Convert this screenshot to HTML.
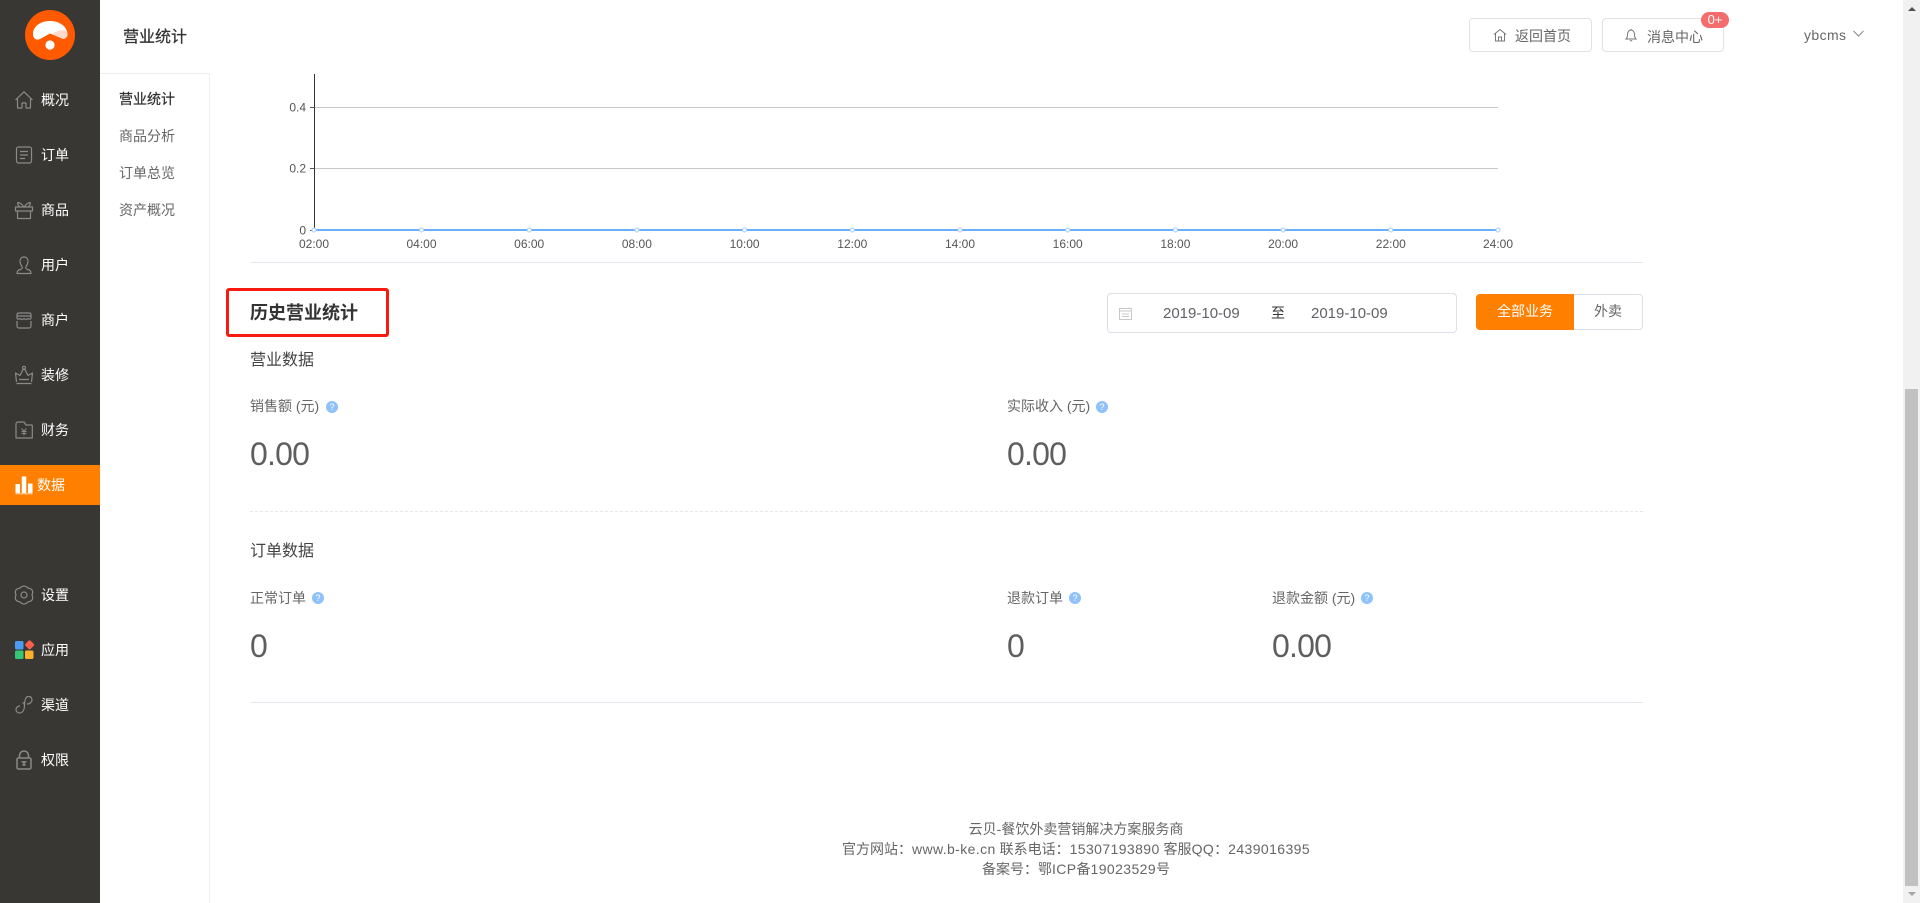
<!DOCTYPE html>
<html lang="zh">
<head>
<meta charset="utf-8">
<title>营业统计</title>
<style>
html,body{margin:0;padding:0;width:1920px;height:903px;overflow:hidden;background:#fff;}
body{position:relative;font-family:"Liberation Sans","Noto Sans CJK SC",sans-serif;font-size:14px;color:#666;}
.t{position:absolute;white-space:nowrap;line-height:20px;height:20px;}
.a{position:absolute;}
#side{position:absolute;left:0;top:0;width:100px;height:903px;background:#393734;}
#side .t{color:#fff;left:41px;}
#side svg{position:absolute;left:14px;width:20px;height:20px;fill:none;stroke:#8a8a8a;stroke-width:1.2;stroke-linejoin:round;}
#active{position:absolute;left:0;top:465px;width:100px;height:40px;background:#ff8000;}
.big{font-size:32px;line-height:40px;height:40px;color:#5e5e5e;letter-spacing:-.8px;}
.q{position:absolute;width:12px;height:12px;border-radius:50%;background:#8fc1fb;color:#fff;font-size:9px;line-height:12px;text-align:center;}
.btn{position:absolute;box-sizing:border-box;border:1px solid #e2e2e2;border-radius:4px;background:#fff;}
.line{position:absolute;left:250px;width:1393px;height:1px;background:#e6e6ee;}
.l{letter-spacing:.4px;}
.d{font-size:15px;color:#606266;}
.s{-webkit-text-stroke:.25px currentColor;}
</style>
</head>
<body>
<div id="side">
  <svg class="a" style="left:25px;top:10px;width:50px;height:50px;stroke:none" viewBox="0 0 50 50">
    <circle cx="25" cy="25" r="25" fill="#ff5a00"/>
    <path d="M8 24C8 16 16 11 25 11C34 11 42 16 42.500 24C42.500 28 39 30 36 28L25 23.500L15 29C11 31 8 28 8 24z" fill="#fff"/>
    <path d="M27 24.200C30 22 33 20.500 38 20C41 21 42.500 22 42.500 24C42.500 28 39 30 36 28z" fill="#ffd9cb"/>
    <circle cx="25" cy="35" r="4.600" fill="#fff"/>
  </svg>

  <svg style="top:90px" viewBox="0 0 20 20"><path d="M1.500 10L10 1.800 18.500 10M3.500 8.500V18H8v-5h4v5h4.500V8.500"/></svg>
  <div class="t" style="top:90px">概况</div>

  <svg style="top:145px" viewBox="0 0 20 20"><rect x="2.500" y="2" width="15" height="16" rx="2"/><path d="M6 6.500h8M6 10h8M6 13.500h5"/></svg>
  <div class="t" style="top:145px">订单</div>

  <svg style="top:200px" viewBox="0 0 20 20"><path d="M1.500 7h17v4h-17zM3.500 11v7.500h13V11M10 7C8 4 5 2.500 4 2.500S4 6 6 7M10 7c2-3 5-4.500 6-4.500S16 6 14 7"/></svg>
  <div class="t" style="top:200px">商品</div>

  <svg style="top:255px" viewBox="0 0 20 20"><path d="M10 2c-2.800 0-4 2-4 4.500S7 10 8 11.500c.5 1 0 2.500-1.500 3C4.500 15 3 15.500 3 18.500h14c0-3-1.500-3.500-3.500-4-1.500-.5-2-2-1.500-3 1-1.500 2-2.500 2-5S12.800 2 10 2z"/></svg>
  <div class="t" style="top:255px">用户</div>

  <svg style="top:310px" viewBox="0 0 20 20"><path d="M4.500 3h11c1 0 1.500 1 1.500 2v3.500c-1 1-2 1-3 0-1.500 1.500-2.500 1-4 0-1.500 1-2.500 1.500-4 0-1 1-2 1-3 0V5c0-1 .5-2 1.500-2zM3 11v5c0 1 .8 2 2 2h10c1.200 0 2-1 2-2v-5M3 6h14"/></svg>
  <div class="t" style="top:310px">商户</div>

  <svg style="top:365px" viewBox="0 0 20 20"><path d="M2.500 17L1.500 8l4.500 2.500L9 4.500h2l3 6L18.500 8l-1 9M5 14.500h10M2.500 18.500h15"/><circle cx="10" cy="2.800" r="1.500"/></svg>
  <div class="t" style="top:365px">装修</div>

  <svg style="top:420px" viewBox="0 0 20 20"><path d="M2 18V4c0-1 .7-2 2-2h6l2 3h5.500c.5 0 .8.500.8 1v12z"/><path d="M7.500 8.500L10 11l2.500-2.500M10 11v4.500M7.500 11.500h5M7.500 13.500h5" stroke-width="1"/></svg>
  <div class="t" style="top:420px">财务</div>

  <div id="active"></div>
  <svg style="top:475px;stroke:none;fill:#fff" viewBox="0 0 20 20"><path d="M1.500 9h4.500v9H1.500zM7.800 1.500h4.500V18H7.800zM14 8.500h4.500V18H14z"/><path d="M1.500 18.500h17v.8h-17z"/></svg>
  <div class="t" style="top:475px;left:37px">数据</div>

  <svg style="top:585px" viewBox="0 0 20 20"><path d="M6 3.100Q10-1 14 3.100Q20.500 4 18 10Q20.500 16 14 16.900Q10 21 6 16.900Q-.5 16 2 10Q-.5 4 6 3.100z"/><circle cx="10" cy="10" r="3"/></svg>
  <div class="t" style="top:585px">设置</div>

  <svg style="top:640px;stroke:none" viewBox="0 0 20 20">
    <rect x="1" y="1" width="8.500" height="8.500" rx="1.500" fill="#4c9bf5"/>
    <rect x="12" y="1.200" width="7.200" height="7.200" rx="1.500" fill="#f8604a" transform="rotate(45 15.600 4.800)"/>
    <rect x="1" y="10.500" width="8.500" height="8.500" rx="1.500" fill="#35c671"/>
    <rect x="11" y="10.500" width="8.500" height="8.500" rx="1.500" fill="#fbb02d"/>
  </svg>
  <div class="t" style="top:640px">应用</div>

  <svg style="top:695px" viewBox="0 0 20 20"><path d="M8.500 8c1.500-.5 2 1 2 3 0 3-1.500 7-5 7-2 0-3.500-1.500-3.500-3.500S4 11 6 11M10.500 11c0-4 .5-9.500 4-9.500 2.500 0 3.500 1.500 3.500 3.500s-2 4-5 4"/></svg>
  <div class="t" style="top:695px">渠道</div>

  <svg style="top:750px;stroke-width:1.500" viewBox="0 0 20 20"><rect x="3" y="8" width="14" height="11" rx="1.500"/><path d="M5.500 8V5.500C5.500 3 7.500 1 10 1s4.500 2 4.500 4.500V8M7.500 12h5M10 12v3M8.500 15h3"/></svg>
  <div class="t" style="top:750px">权限</div>
</div>

<div class="t s" style="left:123px;font-size:16px;color:#333;top:28px">营业统计</div>

<!-- subnav -->
<div class="a" style="left:100px;top:73px;width:110px;height:830px;box-sizing:border-box;border-top:1px solid #eee;border-right:1px solid #eee"></div>
<div class="t s" style="left:119px;top:89px;color:#333">营业统计</div>
<div class="t" style="left:119px;top:126px">商品分析</div>
<div class="t" style="left:119px;top:163px">订单总览</div>
<div class="t" style="left:119px;top:200px">资产概况</div>

<!-- header right -->
<div class="btn" style="left:1469px;top:18px;width:123px;height:34px"></div>
<svg class="a" style="left:1493px;top:28px;width:14px;height:14px;fill:none;stroke:#777;stroke-width:1" viewBox="0 0 14 14"><path d="M1 6.500L7 1.500l6 5M2.500 5.500V13h9V5.500M5.500 13V9h3v4"/></svg>
<div class="t" style="left:1515px;top:26px;color:#666">返回首页</div>
<div class="btn" style="left:1602px;top:18px;width:122px;height:34px"></div>
<svg class="a" style="left:1624px;top:28px;width:14px;height:14px;fill:none;stroke:#777;stroke-width:1" viewBox="0 0 14 14"><path d="M2 11h10c-1-1-1.500-2-1.500-4.500S9 2 7 2 3.500 4 3.500 6.500 3 10 2 11zM5.800 12.800h2.400M7 1v1"/></svg>
<div class="t" style="left:1647px;top:27px;color:#666">消息中心</div>
<div class="a" style="left:1701px;top:12px;width:28px;height:16px;border-radius:8px;background:#f56c6c;color:#fff;font-size:13px;line-height:16px;text-align:center">0+</div>
<div class="t l" style="left:1804px;top:25px;color:#666;font-size:14px">ybcms</div>
<svg class="a" style="left:1853px;top:30px;width:11px;height:7px;fill:none;stroke:#888;stroke-width:1" viewBox="0 0 11 7"><path d="M.5 1L5.500 6l5-5"/></svg>

<!-- chart -->
<svg class="a" style="left:0;top:0;width:1920px;height:300px" viewBox="0 0 1920 300" font-family="'Liberation Sans',sans-serif" font-size="12" fill="#555">
  <path d="M314.500 107.500H1498M314.500 168.500H1498" stroke="#c9c9c9" stroke-width="1"/>
  <path d="M314.500 74V230" stroke="#333" stroke-width="1"/>
  <path d="M310 107.500h4.500M310 168.500h4.500M310 230.500h4.500" stroke="#555" stroke-width="1"/>
  <text x="306" y="111.500" text-anchor="end">0.4</text>
  <text x="306" y="172.500" text-anchor="end">0.2</text>
  <text x="306" y="234.500" text-anchor="end">0</text>
  <path d="M314 230H1498" stroke="#6bb0ff" stroke-width="2"/>
  <g fill="#fff" stroke="#a9cdfb" stroke-width="1">
    <circle cx="314" cy="230" r="2"/><circle cx="421.500" cy="230" r="2"/><circle cx="529.200" cy="230" r="2"/><circle cx="636.900" cy="230" r="2"/><circle cx="744.600" cy="230" r="2"/><circle cx="852.300" cy="230" r="2"/><circle cx="960" cy="230" r="2"/><circle cx="1067.700" cy="230" r="2"/><circle cx="1175.400" cy="230" r="2"/><circle cx="1283.100" cy="230" r="2"/><circle cx="1390.800" cy="230" r="2"/><circle cx="1498" cy="230" r="2"/>
  </g>
  <g text-anchor="middle">
    <text x="314" y="248">02:00</text><text x="421.500" y="248">04:00</text><text x="529.200" y="248">06:00</text><text x="636.900" y="248">08:00</text><text x="744.600" y="248">10:00</text><text x="852.300" y="248">12:00</text><text x="960" y="248">14:00</text><text x="1067.700" y="248">16:00</text><text x="1175.400" y="248">18:00</text><text x="1283.100" y="248">20:00</text><text x="1390.800" y="248">22:00</text><text x="1498" y="248">24:00</text>
  </g>
</svg>
<div class="line" style="top:262px"></div>

<!-- heading -->
<div class="a" style="left:226px;top:288px;width:163px;height:49px;box-sizing:border-box;border:3px solid #fb1a10;border-radius:3px"></div>
<div class="t" style="left:250px;top:303px;font-size:18px;font-weight:700;color:#333">历史营业统计</div>

<!-- date -->
<div class="btn" style="left:1107px;top:293px;width:350px;height:40px;border-color:#dcdfe6"></div>
<svg class="a" style="left:1119px;top:307px;width:13px;height:13px;fill:none;stroke:#c8c8c8;stroke-width:1" viewBox="0 0 13 13"><rect x=".5" y="1.500" width="12" height="11"/><path d="M.5 4h12M3 .5v1.500M10 .5v1.500M3 7h7M3 9.500h7" /></svg>
<div class="t d" style="left:1163px;top:304px">2019-10-09</div>
<div class="t" style="left:1271px;top:303px;color:#333">至</div>
<div class="t d" style="left:1311px;top:304px">2019-10-09</div>

<div class="btn" style="left:1476px;top:294px;width:167px;height:36px;border-color:#dcdfe6"></div>
<div class="a" style="left:1476px;top:294px;width:98px;height:36px;background:#ff8000;border-radius:4px 0 0 4px;color:#fff;text-align:center;line-height:35px">全部业务</div>
<div class="a" style="left:1574px;top:294px;width:68px;height:36px;color:#666;text-align:center;line-height:35px">外卖</div>

<!-- section 1 -->
<div class="t" style="left:250px;font-size:16px;color:#444;top:351px">营业数据</div>
<div class="t" style="left:250px;top:396px">销售额 (元)</div>
<div class="q" style="left:326px;top:401px">?</div>
<div class="t big" style="left:250px;top:434px">0.00</div>
<div class="t" style="left:1007px;top:396px">实际收入 (元)</div>
<div class="q" style="left:1096px;top:401px">?</div>
<div class="t big" style="left:1007px;top:434px">0.00</div>
<div class="a" style="left:250px;top:511px;width:1393px;height:0;border-top:1px dashed #e6e6ee"></div>

<!-- section 2 -->
<div class="t" style="left:250px;top:542px;font-size:16px;color:#444">订单数据</div>
<div class="t" style="left:250px;top:588px">正常订单</div>
<div class="q" style="left:312px;top:592px">?</div>
<div class="t big" style="left:250px;top:626px">0</div>
<div class="t" style="left:1007px;top:588px">退款订单</div>
<div class="q" style="left:1069px;top:592px">?</div>
<div class="t big" style="left:1007px;top:626px">0</div>
<div class="t" style="left:1272px;top:588px">退款金额 (元)</div>
<div class="q" style="left:1361px;top:592px">?</div>
<div class="t big" style="left:1272px;top:626px">0.00</div>
<div class="line" style="top:702px"></div>

<!-- footer -->
<div class="a" style="left:776px;top:819px;width:600px;text-align:center;line-height:20px;color:#666">云贝-餐饮外卖营销解决方案服务商<br>官方网站：<span class="l">www.b-ke.cn</span> 联系电话：<span class="l">15307193890</span> 客服<span class="l">QQ</span>：<span class="l">2439016395</span><br>备案号：鄂<span class="l">ICP</span>备<span class="l">19023529</span>号</div>

<!-- scrollbar -->
<div class="a" style="left:1903px;top:0;width:17px;height:903px;background:#f1f1f1"></div>
<div class="a" style="left:1905px;top:389px;width:13px;height:497px;background:#c1c1c1"></div>
<div class="a" style="left:1908px;top:7px;width:0;height:0;border-left:4px solid transparent;border-right:4px solid transparent;border-bottom:4px solid #505050"></div>
<div class="a" style="left:1908px;top:892px;width:0;height:0;border-left:4px solid transparent;border-right:4px solid transparent;border-top:4px solid #a3a3a3"></div>
</body>
</html>
